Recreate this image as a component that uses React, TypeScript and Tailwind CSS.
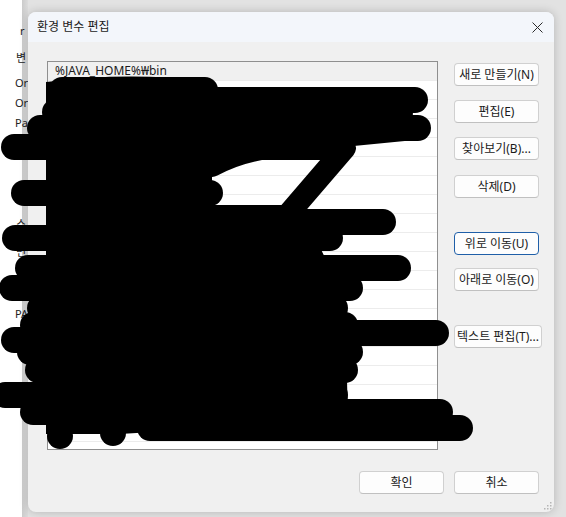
import React from "react";

const sideButtons = [
  { label: "새로 만들기(N)", mt: "mt-[2px]" },
  { label: "편집(E)", mt: "mt-[14px]" },
  { label: "찾아보기(B)...", mt: "mt-[14px]" },
  { label: "삭제(D)", mt: "mt-[15px]" },
  { label: "위로 이동(U)", mt: "mt-[34px]", focused: true },
  { label: "아래로 이동(O)", mt: "mt-[13px]" },
  { label: "텍스트 편집(T)...", mt: "mt-[34px]", wide: true },
];

const parentLines = [
  { text: "r", mt: "mt-[21px]", pl: "pl-[20px]" },
  { text: "변", mt: "mt-[7px]", pl: "pl-[16px]" },
  { text: "Or", mt: "mt-[5px]", pl: "pl-[15px]" },
  { text: "Or", mt: "mt-[0px]", pl: "pl-[15px]" },
  { text: "Pa", mt: "mt-[0px]", pl: "pl-[15px]" },
  { text: "스", mt: "mt-[81px]", pl: "pl-[16px]" },
  { text: "변", mt: "mt-[8px]", pl: "pl-[16px]" },
  { text: "O", mt: "mt-[5px]", pl: "pl-[18px]" },
  { text: "PA", mt: "mt-[17px]", pl: "pl-[15px]" },
];

// black marker strokes drawn over the list: [y, x1, x2]
const strokes: [number, number, number][] = [
  [90, 62, 205],
  [100, 190, 415],
  [112, 55, 400],
  [128, 40, 418],
  [147, 14, 338],
  [193, 24, 210],
  [222, 60, 383],
  [238, 15, 330],
  [268, 28, 398],
  [288, 12, 350],
  [308, 40, 335],
  [325, 33, 345],
  [333, 100, 436],
  [340, 14, 300],
  [352, 30, 350],
  [370, 38, 345],
  [395, 5, 335],
  [412, 33, 440],
  [428, 150, 460],
];

function Scribble() {
  return (
    <svg
      className="absolute inset-0 pointer-events-none"
      width="566"
      height="517"
      viewBox="0 0 566 517"
    >
      <path
        d="M46 82 Q120 72 205 80 L212 165 L212 205 L300 205 L345 300 L348 420 L120 434 L46 434 Z"
        fill="#000"
      />
      <path d="M200 90 Q300 84 410 92 L415 140 L210 160 Z" fill="#000" />
      <g stroke="#000" strokeWidth="26" strokeLinecap="round" fill="none">
        {strokes.map(([y, x1, x2], i) => (
          <line key={i} x1={x1} y1={y} x2={x2} y2={y} />
        ))}
        <path d="M212 166 Q262 138 345 148 L290 212" strokeWidth="22" strokeLinejoin="round" />
      </g>
      <circle cx="60" cy="436" r="13" fill="#000" />
      <circle cx="113" cy="433" r="13" fill="#000" />
    </svg>
  );
}

function Button({ label, focused, wide }: { label: string; focused?: boolean; wide?: boolean }) {
  return (
    <button
      className={`h-[23px] ${wide ? "w-[88px]" : "w-[85px]"} shrink-0 rounded-[4px] border ${
        focused ? "border-[#1f5fa8]" : "border-[#d0d0d0] border-b-[#c0c0c0]"
      } bg-[#fdfdfd] text-[12px] leading-none text-[#1a1a1a] whitespace-nowrap flex items-center justify-center`}
    >
      {label}
    </button>
  );
}

export default function App() {
  const rows = Array.from({ length: 20 });

  return (
    <div className="relative w-[566px] h-[517px] overflow-hidden flex bg-[#e2e2e2] font-['Noto_Sans','Noto_Sans_CJK_KR',sans-serif]">
      {/* parent window peeking out on the left */}
      <div className="w-[28px] h-full shrink-0 overflow-hidden bg-[linear-gradient(to_right,#ffffff_22px,#cbcbcb_22px,#dcdcdc_28px)] flex flex-col text-[11px] text-[#222]">
        {parentLines.map((l, i) => (
          <div key={i} className={`h-[20px] ${l.mt} ${l.pl} leading-[20px] whitespace-nowrap`}>
            {l.text}
          </div>
        ))}
      </div>

      <div className="pt-[12px] shrink-0">
        <div className="w-[526px] h-[500px] rounded-[8px] bg-[#f0f0f0] shadow-[0_0_10px_rgba(0,0,0,0.2)] flex flex-col overflow-hidden relative">
          {/* title bar */}
          <div className="h-[30px] shrink-0 bg-[#f3f6fb] flex items-center justify-between pl-[9px] pr-[11px]">
            <span className="text-[12px] text-[#1a1a1a]">환경 변수 편집</span>
            <svg width="11" height="11" viewBox="0 0 11 11">
              <path d="M0.5 0.5 L10.5 10.5 M10.5 0.5 L0.5 10.5" stroke="#2b2b2b" strokeWidth="1" />
            </svg>
          </div>

          {/* body */}
          <div className="flex-1 flex flex-col pl-[19px] pr-[15px] pt-[19px]">
            <div className="flex gap-[16px]">
              <div className="w-[391px] h-[389px] shrink-0 border border-[#8f8f8f] bg-white overflow-hidden">
                {rows.map((_, i) => (
                  <div
                    key={i}
                    className={`h-[19px] border-b border-[#ececec] pl-[7px] text-[12px] leading-[18px] text-[#1a1a1a] ${
                      i === 0 ? "bg-[#f0f0f0]" : ""
                    }`}
                  >
                    {i === 0 ? "%JAVA_HOME%₩bin" : ""}
                  </div>
                ))}
              </div>
              <div className="w-[85px] shrink-0 flex flex-col">
                {sideButtons.map((b) => (
                  <div key={b.label} className={b.mt}>
                    <Button label={b.label} focused={b.focused} wide={b.wide} />
                  </div>
                ))}
              </div>
            </div>

            <div className="mt-[21px] flex justify-end gap-[10px]">
              <Button label="확인" />
              <Button label="취소" />
            </div>
          </div>

          {/* resize grip */}
          <svg width="9" height="9" viewBox="0 0 9 9" className="absolute right-[2px] bottom-[2px]">
            {[
              [7, 1],
              [4, 4],
              [7, 4],
              [1, 7],
              [4, 7],
              [7, 7],
            ].map(([x, y], i) => (
              <rect key={i} x={x} y={y} width="1.5" height="1.5" fill="#b5b5b5" />
            ))}
          </svg>
        </div>
      </div>

      <Scribble />
    </div>
  );
}
